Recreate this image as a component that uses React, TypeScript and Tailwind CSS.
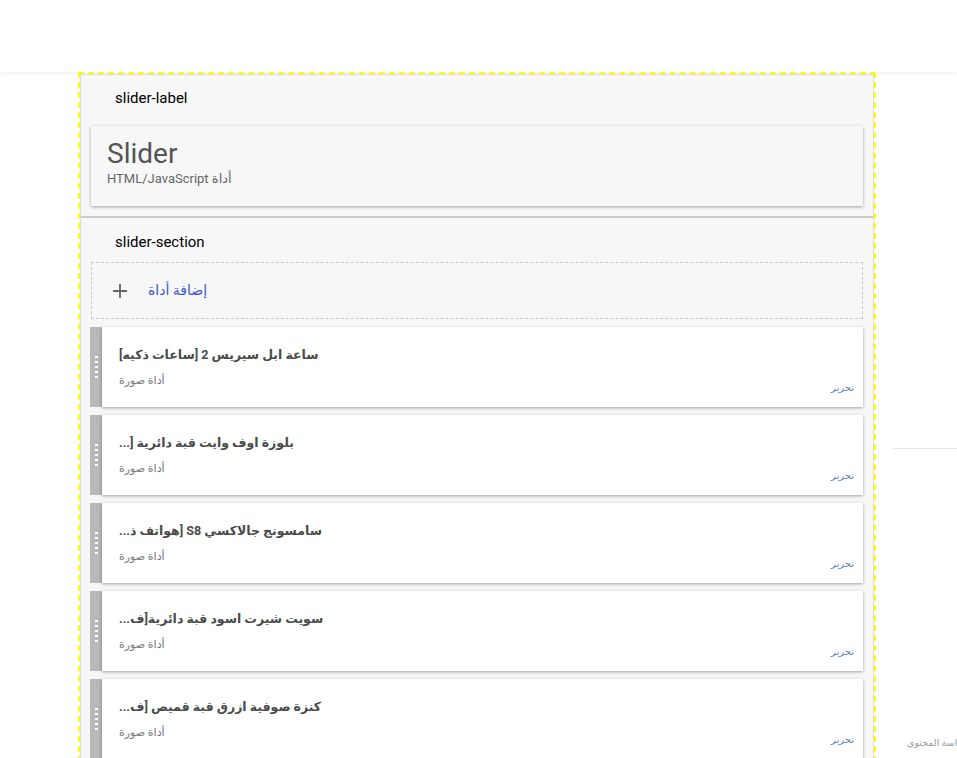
import React from 'react';

const items = [
  'ساعة ابل سيريس 2 [ساعات ذكيه]',
  'بلوزة اوف وايت قبة دائرية [...',
  'سامسونج جالاكسي S8 [هواتف ذ...',
  'سويت شيرت اسود قبة دائرية[ف...',
  'كنزة صوفية ازرق قبة قميص [ف...',
];

function Handle() {
  return (
    <div className="w-[12px] shrink-0 bg-[#b8b8b8] flex flex-col items-center justify-center gap-[3px]">
      {[0, 1, 2, 3, 4].map((i) => (
        <span key={i} className="block w-[3px] h-[2px] bg-white" />
      ))}
    </div>
  );
}

function Gadget({ title }: { title: string }) {
  return (
    <div className="flex h-[80px] mb-[8px] ml-[-1px]">
      <Handle />
      <div className="relative flex-1 bg-white shadow-[0_1px_3px_rgba(0,0,0,0.35)] pl-[17px] pt-[18px]">
        <div dir="rtl" className="text-[12.5px] font-bold text-[#4a4a4a] leading-[20px] text-left">{title}</div>
        <div dir="rtl" className="text-[11px] text-[#777] leading-[16px] mt-[8px] text-left">أداة صورة</div>
        <div className="absolute right-[9px] bottom-[12px] text-[10px] text-[#5b7fc6]">تحرير</div>
      </div>
    </div>
  );
}

export default function App() {
  return (
    <div className="w-[957px] h-[758px] overflow-hidden bg-white font-['Roboto','DejaVu_Sans',sans-serif]">
      <div className="h-[72px] bg-white shadow-[0_2px_4px_rgba(0,0,0,0.05)] relative z-0" />
      <div className="flex">
        <div className="w-[78px] shrink-0" />
        <div className="w-[798px] shrink-0 border-2 border-dashed border-[#ffff00] relative z-10 h-[700px]">
          <div className="h-full bg-[#f7f7f7] border border-[#dcdcdc]">
            <div className="pt-[13px] pl-[34px] h-[51px] text-[15px] text-black leading-[20px]">slider-label</div>
            <div className="mx-[10px] h-[80px] bg-[#f7f7f7] shadow-[0_1px_3px_rgba(0,0,0,0.35)] pl-[16px] pt-[11px]">
              <div className="text-[28px] leading-[34px] text-[#555]">Slider</div>
              <div className="text-[13px] leading-[16px] text-[#666]">HTML/JavaScript أداة</div>
            </div>
            <div className="mt-[10px] h-[2px] bg-[#cccccc]" />
            <div className="pt-[14px] pl-[34px] h-[44px] text-[15px] text-black leading-[20px]">slider-section</div>
            <div className="mx-[10px] h-[57px] border border-dashed border-[#c8c8c8] flex items-center pl-[20px]">
              <svg width="16" height="16" viewBox="0 0 16 16" className="text-[#666]">
                <path d="M8 1v14M1 8h14" stroke="currentColor" strokeWidth="1.8" />
              </svg>
              <span dir="rtl" className="ml-[20px] text-[14px] text-[#3b55d4]">إضافة أداة</span>
            </div>
            <div className="mx-[10px] mt-[8px]">
              {items.map((t) => (
                <Gadget key={t} title={t} />
              ))}
            </div>
          </div>
        </div>
        <div className="flex-1 pl-[17px]">
          <div className="pt-[376px]">
            <div className="h-[1px] bg-[#e6e6e6] w-[100px]" />
          </div>
          <div className="mt-[287px] ml-[14px] whitespace-nowrap text-[9.5px] text-[#999]">
            <span dir="rtl">سياسة المحتوى</span>
          </div>
        </div>
      </div>
    </div>
  );
}
